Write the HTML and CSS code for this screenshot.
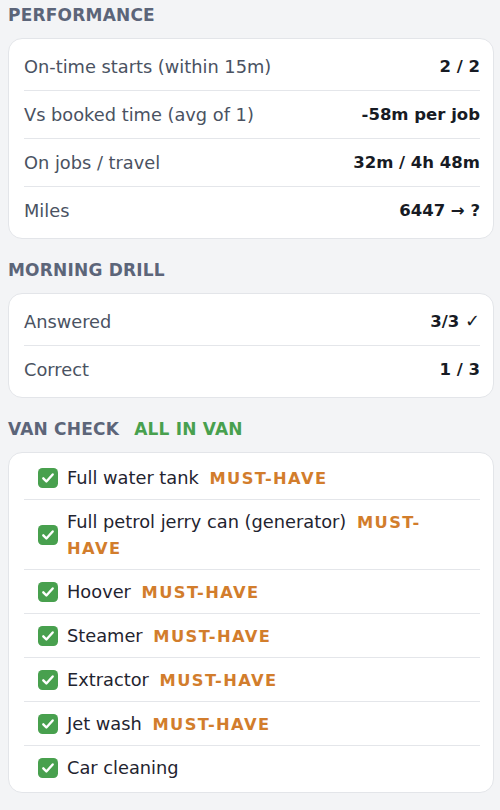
FILE: index.html
```html
<!DOCTYPE html>
<html>
<head>
<meta charset="utf-8">
<link rel="stylesheet" href="styles.css">
</head>
<body>
<section class="section">
  <h2 class="heading">PERFORMANCE</h2>
  <div class="card">
    <div class="row"><span class="label">On-time starts (within 15m)</span><span class="value">2 / 2</span></div>
    <div class="row"><span class="label">Vs booked time (avg of 1)</span><span class="value">-58m per job</span></div>
    <div class="row"><span class="label">On jobs / travel</span><span class="value">32m / 4h 48m</span></div>
    <div class="row"><span class="label">Miles</span><span class="value">6447 → ?</span></div>
  </div>
</section>
<section class="section">
  <h2 class="heading">MORNING DRILL</h2>
  <div class="card">
    <div class="row"><span class="label">Answered</span><span class="value">3/3 <span class="tick">✓</span></span></div>
    <div class="row"><span class="label">Correct</span><span class="value">1 / 3</span></div>
  </div>
</section>
<section class="section">
  <h2 class="heading">VAN CHECK <span class="ok">ALL IN VAN</span></h2>
  <div class="card card-list">
    <div class="item"><span class="box"><svg viewBox="0 0 20 20" width="20" height="20"><rect width="20" height="20" rx="4.5" fill="#48a04e"/><path d="M5.3 10.3l3.1 3.2 6.3-7" fill="none" stroke="#fff" stroke-width="2.4" stroke-linecap="round" stroke-linejoin="round"/></svg></span><span class="text">Full water tank <b class="must">MUST-HAVE</b></span></div>
    <div class="item"><span class="box"><svg viewBox="0 0 20 20" width="20" height="20"><rect width="20" height="20" rx="4.5" fill="#48a04e"/><path d="M5.3 10.3l3.1 3.2 6.3-7" fill="none" stroke="#fff" stroke-width="2.4" stroke-linecap="round" stroke-linejoin="round"/></svg></span><span class="text">Full petrol jerry can (generator) <b class="must">MUST-HAVE</b></span></div>
    <div class="item"><span class="box"><svg viewBox="0 0 20 20" width="20" height="20"><rect width="20" height="20" rx="4.5" fill="#48a04e"/><path d="M5.3 10.3l3.1 3.2 6.3-7" fill="none" stroke="#fff" stroke-width="2.4" stroke-linecap="round" stroke-linejoin="round"/></svg></span><span class="text">Hoover <b class="must">MUST-HAVE</b></span></div>
    <div class="item"><span class="box"><svg viewBox="0 0 20 20" width="20" height="20"><rect width="20" height="20" rx="4.5" fill="#48a04e"/><path d="M5.3 10.3l3.1 3.2 6.3-7" fill="none" stroke="#fff" stroke-width="2.4" stroke-linecap="round" stroke-linejoin="round"/></svg></span><span class="text">Steamer <b class="must">MUST-HAVE</b></span></div>
    <div class="item"><span class="box"><svg viewBox="0 0 20 20" width="20" height="20"><rect width="20" height="20" rx="4.5" fill="#48a04e"/><path d="M5.3 10.3l3.1 3.2 6.3-7" fill="none" stroke="#fff" stroke-width="2.4" stroke-linecap="round" stroke-linejoin="round"/></svg></span><span class="text">Extractor <b class="must">MUST-HAVE</b></span></div>
    <div class="item"><span class="box"><svg viewBox="0 0 20 20" width="20" height="20"><rect width="20" height="20" rx="4.5" fill="#48a04e"/><path d="M5.3 10.3l3.1 3.2 6.3-7" fill="none" stroke="#fff" stroke-width="2.4" stroke-linecap="round" stroke-linejoin="round"/></svg></span><span class="text">Jet wash <b class="must">MUST-HAVE</b></span></div>
    <div class="item"><span class="box"><svg viewBox="0 0 20 20" width="20" height="20"><rect width="20" height="20" rx="4.5" fill="#48a04e"/><path d="M5.3 10.3l3.1 3.2 6.3-7" fill="none" stroke="#fff" stroke-width="2.4" stroke-linecap="round" stroke-linejoin="round"/></svg></span><span class="text">Car cleaning</span></div>
  </div>
</section>
</body>
</html>
```

FILE: styles.css
```css
html, body {
  margin: 0;
  padding: 0;
  background: #f3f4f6;
}
body {
  padding: 0 6px 0 8px;
  font-family: "DejaVu Sans", "Noto Sans", sans-serif;
  color: #1f2430;
}
.section {
  display: flex;
  flex-direction: column;
}
.heading {
  margin: 0;
  height: 38px;
  padding-top: 4px;
  box-sizing: border-box;
  font-size: 17px;
  line-height: 22px;
  font-weight: 700;
  letter-spacing: 0.2px;
  color: #5c6579;
}
.section + .section .heading {
  height: 54px;
  padding-top: 20px;
}
.ok {
  color: #48a04e;
  margin-left: 9px;
}
.card {
  background: #fff;
  border: 1px solid #e3e5e9;
  border-radius: 14px;
  padding: 4px 13px 4px 15px;
}
.card-list {
  padding-top: 3px;
  padding-bottom: 3px;
}
.row {
  display: flex;
  justify-content: space-between;
  align-items: center;
  height: 47px;
}
.row + .row, .item + .item {
  border-top: 1px solid #e4e6ea;
}
.label {
  font-size: 17.8px;
  color: #4a5262;
}
.value {
  font-size: 16.5px;
  font-weight: 700;
  color: #171b24;
}
.tick {
  font-size: 18px;
  line-height: 1;
}
.item {
  display: flex;
  align-items: center;
  gap: 9px;
  padding: 8.5px 20px 8.5px 14px;
  font-size: 17.8px;
  line-height: 26px;
}
.box {
  flex: none;
  width: 20px;
  height: 20px;
  display: flex;
}
.text {
  color: #1f2430;
}
.must {
  font-size: 16.3px;
  line-height: 1;
  font-weight: 700;
  color: #d27d2c;
  letter-spacing: 1.4px;
  margin-left: 5px;
}
```
